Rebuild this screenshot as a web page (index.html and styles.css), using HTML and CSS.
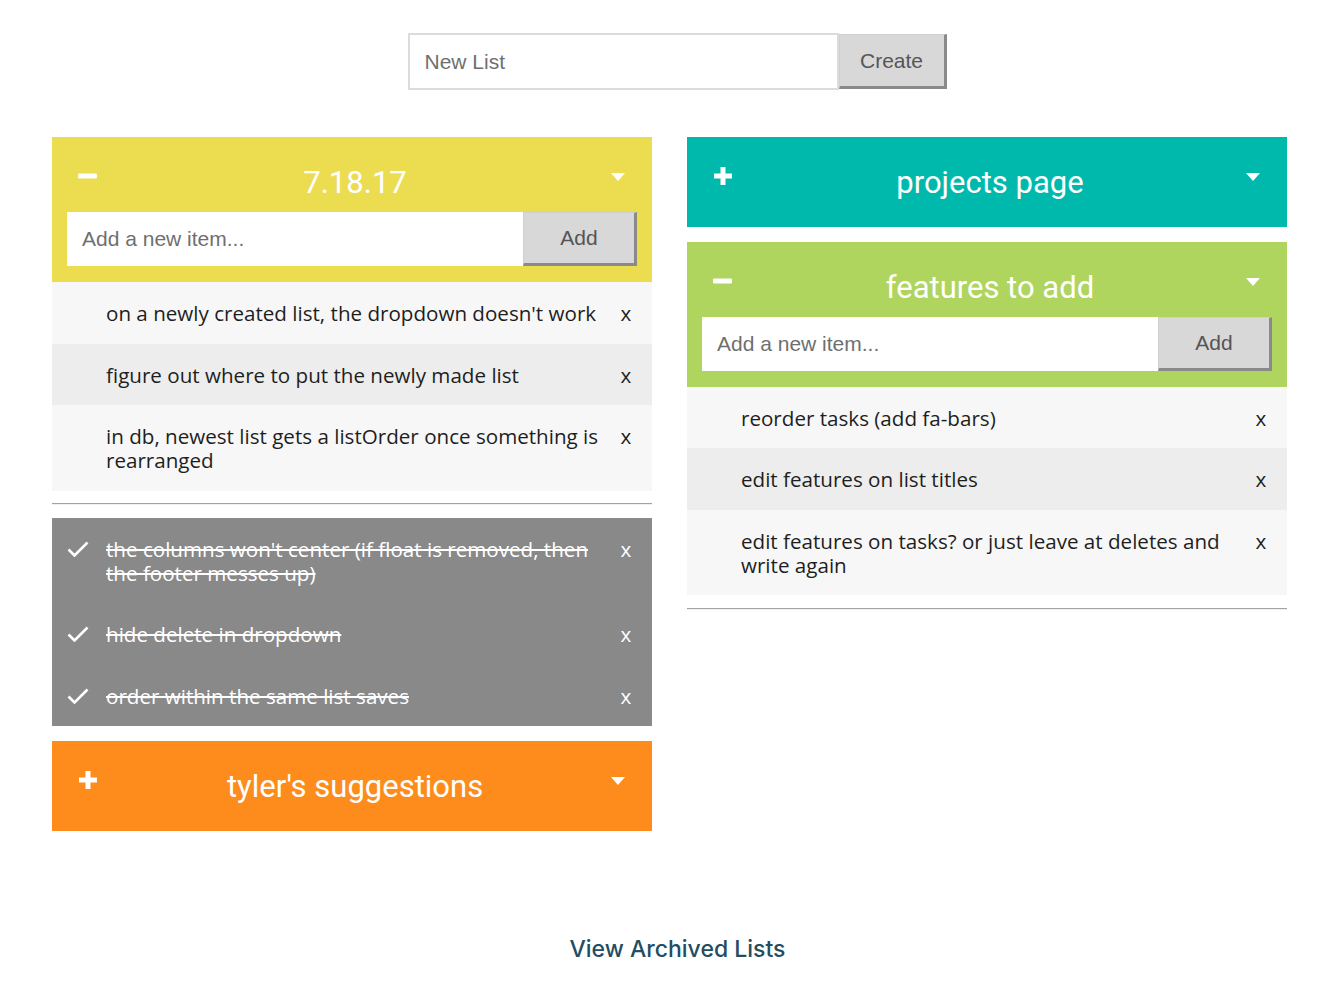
FILE: index.html
```html
<!DOCTYPE html>
<html lang="en">
<head>
<meta charset="utf-8">
<title>Lists</title>
<link rel="stylesheet" href="styles.css">
</head>
<body>
<form class="new-list">
  <input class="new-list-input" type="text" placeholder="New List">
  <button class="btn new-list-btn" type="button">Create</button>
</form>

<main class="columns">
  <div class="column">
    <section class="list">
      <div class="card card-yellow">
        <div class="card-title-row">
          <span class="toggle"><svg class="icon-minus" width="19" height="6" viewBox="0 0 19 6"><rect x="0" y="0.5" width="19" height="5" rx="1" fill="#fff"/></svg></span>
          <h2 class="card-title">7.18.17</h2>
          <span class="caret"><svg width="14" height="8" viewBox="0 0 14 8"><path d="M0 0H14L7 8Z" fill="#fff"/></svg></span>
        </div>
        <div class="add-row">
          <input class="add-input" type="text" placeholder="Add a new item...">
          <button class="btn add-btn" type="button">Add</button>
        </div>
      </div>
      <ul class="items">
        <li class="item"><span class="item-text">on a newly created list, the dropdown doesn't work</span><span class="del">x</span></li>
        <li class="item"><span class="item-text">figure out where to put the newly made list</span><span class="del">x</span></li>
        <li class="item"><span class="item-text">in db, newest list gets a listOrder once something is rearranged</span><span class="del">x</span></li>
      </ul>
      <hr class="sep">
      <ul class="items done">
        <li class="item"><svg class="check" width="22" height="16" viewBox="0 0 22 16"><path d="M1.5 8.5L7.5 14.5L20.5 1.5" fill="none" stroke="#fff" stroke-width="2.6"/></svg><span class="item-text">the columns won't center (if float is removed, then the footer messes up)</span><span class="del">x</span></li>
        <li class="item"><svg class="check" width="22" height="16" viewBox="0 0 22 16"><path d="M1.5 8.5L7.5 14.5L20.5 1.5" fill="none" stroke="#fff" stroke-width="2.6"/></svg><span class="item-text">hide delete in dropdown</span><span class="del">x</span></li>
        <li class="item"><svg class="check" width="22" height="16" viewBox="0 0 22 16"><path d="M1.5 8.5L7.5 14.5L20.5 1.5" fill="none" stroke="#fff" stroke-width="2.6"/></svg><span class="item-text">order within the same list saves</span><span class="del">x</span></li>
      </ul>
    </section>

    <section class="list">
      <div class="card card-orange collapsed">
        <div class="card-title-row">
          <span class="toggle"><svg class="icon-plus" width="20" height="20" viewBox="0 0 20 20"><path d="M7.5 1H12.5V7.5H19V12.5H12.5V19H7.5V12.5H1V7.5H7.5Z" fill="#fff"/></svg></span>
          <h2 class="card-title">tyler's suggestions</h2>
          <span class="caret"><svg width="14" height="8" viewBox="0 0 14 8"><path d="M0 0H14L7 8Z" fill="#fff"/></svg></span>
        </div>
      </div>
    </section>
  </div>

  <div class="column">
    <section class="list">
      <div class="card card-teal collapsed">
        <div class="card-title-row">
          <span class="toggle"><svg class="icon-plus" width="20" height="20" viewBox="0 0 20 20"><path d="M7.5 1H12.5V7.5H19V12.5H12.5V19H7.5V12.5H1V7.5H7.5Z" fill="#fff"/></svg></span>
          <h2 class="card-title">projects page</h2>
          <span class="caret"><svg width="14" height="8" viewBox="0 0 14 8"><path d="M0 0H14L7 8Z" fill="#fff"/></svg></span>
        </div>
      </div>
    </section>

    <section class="list">
      <div class="card card-green">
        <div class="card-title-row">
          <span class="toggle"><svg class="icon-minus" width="19" height="6" viewBox="0 0 19 6"><rect x="0" y="0.5" width="19" height="5" rx="1" fill="#fff"/></svg></span>
          <h2 class="card-title">features to add</h2>
          <span class="caret"><svg width="14" height="8" viewBox="0 0 14 8"><path d="M0 0H14L7 8Z" fill="#fff"/></svg></span>
        </div>
        <div class="add-row">
          <input class="add-input" type="text" placeholder="Add a new item...">
          <button class="btn add-btn" type="button">Add</button>
        </div>
      </div>
      <ul class="items">
        <li class="item"><span class="item-text">reorder tasks (add fa-bars)</span><span class="del">x</span></li>
        <li class="item"><span class="item-text">edit features on list titles</span><span class="del">x</span></li>
        <li class="item"><span class="item-text">edit features on tasks? or just leave at deletes and write again</span><span class="del">x</span></li>
      </ul>
      <hr class="sep">
    </section>
  </div>
</main>

<footer class="footer">
  <a class="archived-link" href="#">View Archived Lists</a>
</footer>
</body>
</html>
```

FILE: styles.css
```css
* { box-sizing: border-box; }

body {
  margin: 0;
  background: #fff;
  font-family: "Open Sans", "Noto Sans", sans-serif;
  color: #222;
}

.new-list {
  display: flex;
  justify-content: center;
  margin: 33px 0 0;
  padding-left: 15px;
}

.new-list-input {
  width: 431px;
  height: 57px;
  border: 2px solid #dcdcdc;
  padding: 0 15px;
  font-family: "Liberation Sans", Arial, sans-serif;
  font-size: 21px;
  color: #444;
  outline: none;
}

.new-list-input::placeholder,
.add-input::placeholder {
  color: #6f6f6f;
}

.btn {
  background: #d8d8d8;
  border-top: 1px solid #d0d0d0;
  border-left: 1px solid #d0d0d0;
  border-right: 3px solid #8a8a8a;
  border-bottom: 3px solid #8a8a8a;
  font-family: "Liberation Sans", Arial, sans-serif;
  font-size: 21px;
  color: #555;
  padding: 0;
}

.new-list-btn {
  width: 108px;
  height: 55px;
  margin-top: 1px;
}

.columns {
  display: flex;
  justify-content: center;
  gap: 35px;
  margin-top: 47px;
}

.column {
  width: 600px;
}

.list {
  margin-bottom: 15px;
}

.card {
  padding: 15px 15px 16px;
}

.card.collapsed {
  padding-bottom: 14.5px;
}

.card-yellow { background: #ecdd50; }
.card-teal { background: #00b9ad; }
.card-green { background: #afd55e; }
.card-orange { background: #fe8c1c; }

.card-title-row {
  display: grid;
  grid-template-columns: 66px 1fr 60px;
  height: 60px;
}

.toggle {
  padding-left: 11px;
}

.icon-minus {
  display: block;
  margin-top: 21px;
}

.icon-plus {
  display: block;
  margin-top: 14px;
}

.caret {
  display: flex;
  justify-content: flex-end;
  padding-right: 12px;
}

.caret svg {
  display: block;
  margin-top: 21px;
}

.card-title {
  margin: 0;
  text-align: center;
  font-family: Roboto, "Noto Sans", sans-serif;
  font-weight: 400;
  font-size: 31px;
  line-height: 62px;
  color: #fff;
}

.add-row {
  display: flex;
  height: 54px;
}

.add-input {
  flex: 1;
  min-width: 0;
  border: none;
  padding: 0 15px;
  font-family: "Liberation Sans", Arial, sans-serif;
  font-size: 21px;
  color: #444;
  outline: none;
  background: #fff;
}

.add-btn {
  width: 114px;
  height: 54px;
}

.items {
  list-style: none;
  margin: 0;
  padding: 0;
}

.item {
  display: flex;
  align-items: flex-start;
  padding: 19px 20px 18.5px 54px;
  font-size: 20.6px;
  line-height: 24px;
  background: #f7f7f7;
  color: #1e1e1e;
}

.items .item:nth-child(even) {
  background: #ededed;
}

.item-text {
  flex: 1;
}

.del {
  width: 12px;
  margin-left: 10px;
  text-align: center;
}

.sep {
  margin: 12.5px 0;
  border: none;
  border-top: 1px solid #a3a3a3;
  border-bottom: 1px solid #efefef;
  height: 0;
}

.done .item,
.done .item:nth-child(even) {
  background: #898989;
  color: #fff;
  padding-left: 15px;
}

.done .item-text {
  text-decoration: line-through;
}

.check {
  flex: none;
  margin: 4px 17px 0 0;
}

.footer {
  text-align: center;
  margin-top: 89px;
  padding: 0 0 30px 16px;
}

.archived-link {
  font-family: Inter, Roboto, sans-serif;
  font-size: 23px;
  font-weight: 500;
  color: #234d62;
  text-decoration: none;
}
```
